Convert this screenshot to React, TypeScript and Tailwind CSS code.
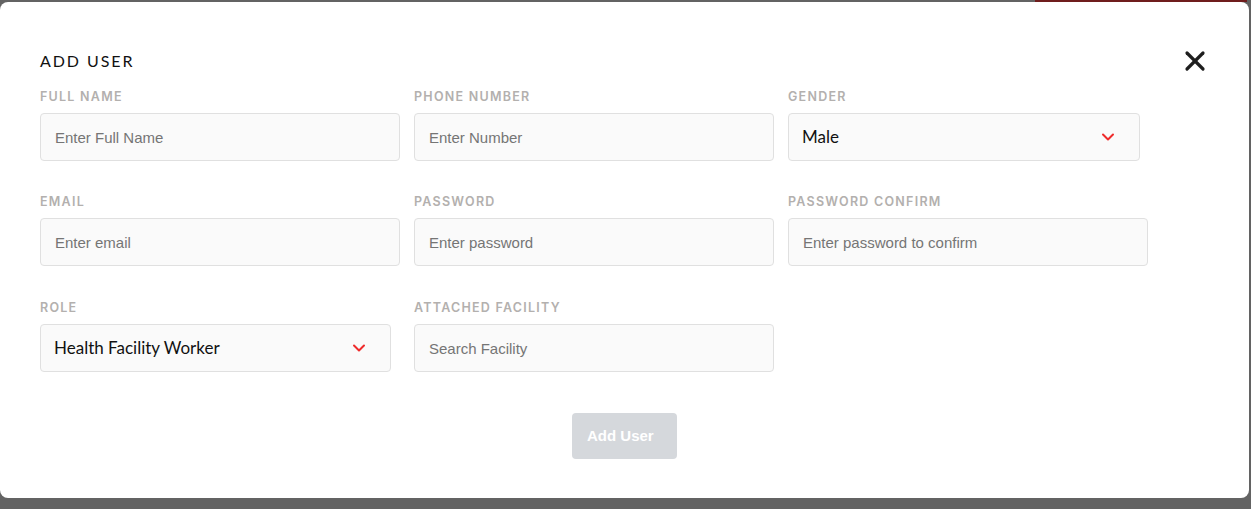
import { ChevronDown, X } from 'lucide-react'

const labelCls =
  'block text-[12.5px] leading-4 font-semibold tracking-[0.1em] uppercase text-[#b3b0ae] mb-[8px] font-["Inter",sans-serif]'

const inputCls =
  'h-12 w-full rounded border border-[#e0e0e0] bg-[#fafafa] px-[14px] text-[15px] text-[#333] placeholder:text-[#757575] outline-none font-["Liberation_Sans",Arial,sans-serif]'

function TextField({ label, placeholder, width }: { label: string; placeholder: string; width: string }) {
  return (
    <div className={width}>
      <label className={labelCls}>{label}</label>
      <input className={inputCls} placeholder={placeholder} />
    </div>
  )
}

function SelectField({ label, value, width }: { label: string; value: string; width: string }) {
  return (
    <div className={width}>
      <label className={labelCls}>{label}</label>
      <div className="h-12 w-full rounded border border-[#e0e0e0] bg-[#fafafa] pl-[13px] pr-[21px] flex items-center justify-between">
        <span className='text-[17px] text-[#111] font-["Lato",sans-serif]'>{value}</span>
        <ChevronDown className="w-[20px] h-[20px] text-[#ef2b2b]" strokeWidth={2.4} />
      </div>
    </div>
  )
}

export default function App() {
  return (
    <div className="relative w-[1251px] h-[509px] bg-[#636363] pt-[2px] overflow-hidden">
      {/* red button peeking behind the overlay */}
      <div className="absolute top-0 left-[1035px] w-[212px] h-[2px] bg-[#6f1d1d]" />

      <div className="relative w-[1249px] h-[496px] bg-white rounded-lg px-10 pt-[47px]">
        <button className="absolute top-[43px] right-[38px] text-[#1e1e1e]">
          <X className="w-[32px] h-[32px]" strokeWidth={2.4} />
        </button>

        <h2 className='text-[16px] leading-6 tracking-[0.12em] text-[#111] font-["Lato",sans-serif] mb-[16px]'>
          ADD USER
        </h2>

        <div className="flex gap-[14px]">
          <TextField label="Full Name" placeholder="Enter Full Name" width="w-[360px]" />
          <TextField label="Phone Number" placeholder="Enter Number" width="w-[360px]" />
          <SelectField label="Gender" value="Male" width="w-[352px]" />
        </div>

        <div className="flex gap-[14px] mt-[33px]">
          <TextField label="Email" placeholder="Enter email" width="w-[360px]" />
          <TextField label="Password" placeholder="Enter password" width="w-[360px]" />
          <TextField label="Password Confirm" placeholder="Enter password to confirm" width="w-[360px]" />
        </div>

        <div className="flex gap-[14px] mt-[34px]">
          <div className="w-[360px]">
            <div className="w-[351px]">
              <SelectField label="Role" value="Health Facility Worker" width="w-full" />
            </div>
          </div>
          <TextField label="Attached Facility" placeholder="Search Facility" width="w-[360px]" />
        </div>

        <div className="flex justify-center mt-[41px]">
          <button className='h-[46px] w-[105px] rounded bg-[#d5d8dc] text-white text-left pl-[15px] text-[15px] font-bold font-["Liberation_Sans",Arial,sans-serif]'>
            Add User
          </button>
        </div>
      </div>
    </div>
  )
}
